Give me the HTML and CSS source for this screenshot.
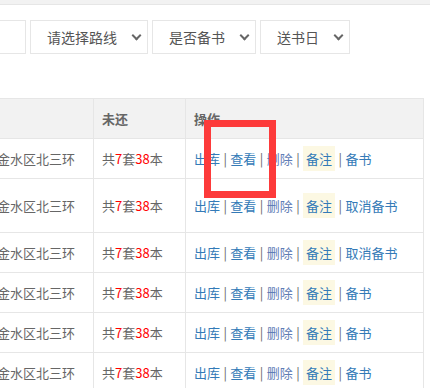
FILE: index.html
```html
<!DOCTYPE html>
<html lang="zh-CN">
<head>
    <meta charset="UTF-8">
    <meta name="viewport" content="width=device-width, initial-scale=1.0">
    <title>借书列表</title>
    <link rel="stylesheet" href="styles.css">
</head>
<body>
    <div class="top-bar"></div>
    <div class="panel">
        <div class="filters">
            <input type="text" class="search-box">
            <div class="select-box">请选择路线<span class="arrow"></span></div>
            <div class="select-box">是否备书<span class="arrow"></span></div>
            <div class="select-box">送书日<span class="arrow"></span></div>
        </div>

        <div class="table-wrap">
            <table class="list-table">
                <colgroup>
                    <col class="col-addr">
                    <col class="col-left">
                    <col class="col-ops">
                </colgroup>
                <thead>
                    <tr>
                        <th></th>
                        <th>未还</th>
                        <th>操作</th>
                    </tr>
                </thead>
                <tbody>
                    <tr>
                        <td>金水区北三环</td>
                        <td>共<span class="num">7</span>套<span class="num">38</span>本</td>
                        <td class="ops"><a>出库</a> | <a>查看</a> | <a class="del">删除</a> | <span class="note">备注</span> | <a>备书</a></td>
                    </tr>
                    <tr class="tall">
                        <td>金水区北三环</td>
                        <td>共<span class="num">7</span>套<span class="num">38</span>本</td>
                        <td class="ops"><a>出库</a> | <a>查看</a> | <a class="del">删除</a> | <span class="note">备注</span> | <a>取消备书</a></td>
                    </tr>
                    <tr>
                        <td>金水区北三环</td>
                        <td>共<span class="num">7</span>套<span class="num">38</span>本</td>
                        <td class="ops"><a>出库</a> | <a>查看</a> | <a class="del">删除</a> | <span class="note">备注</span> | <a>取消备书</a></td>
                    </tr>
                    <tr>
                        <td>金水区北三环</td>
                        <td>共<span class="num">7</span>套<span class="num">38</span>本</td>
                        <td class="ops"><a>出库</a> | <a>查看</a> | <a class="del">删除</a> | <span class="note">备注</span> | <a>备书</a></td>
                    </tr>
                    <tr>
                        <td>金水区北三环</td>
                        <td>共<span class="num">7</span>套<span class="num">38</span>本</td>
                        <td class="ops"><a>出库</a> | <a>查看</a> | <a class="del">删除</a> | <span class="note">备注</span> | <a>备书</a></td>
                    </tr>
                    <tr>
                        <td>金水区北三环</td>
                        <td>共<span class="num">7</span>套<span class="num">38</span>本</td>
                        <td class="ops"><a>出库</a> | <a>查看</a> | <a class="del">删除</a> | <span class="note">备注</span> | <a>备书</a></td>
                    </tr>
                </tbody>
            </table>
        </div>
    </div>

    <div class="mark-box"></div>
</body>
</html>
```

FILE: styles.css
```css
body {
    margin: 0;
    font-family: "Noto Sans CJK SC", "Noto Sans", sans-serif;
    background: #fff;
    color: #666;
    overflow: hidden;
    height: 388px;
    position: relative;
}

.top-bar {
    height: 4px;
    background: #f2f2f2;
    border-bottom: 1px solid #e6e6e6;
}

.panel {
    padding-top: 15px;
}

.filters {
    display: flex;
    gap: 4px;
    margin-left: -74px;
}

.search-box {
    width: 100px;
    height: 34px;
    box-sizing: border-box;
    border: 1px solid #e6e6e6;
    margin: 0;
    padding: 0;
}

.select-box {
    position: relative;
    height: 34px;
    box-sizing: border-box;
    border: 1px solid #e6e6e6;
    padding: 0 30px 0 16px;
    font-size: 14px;
    line-height: 32px;
    color: #555;
    white-space: nowrap;
}

.arrow {
    position: absolute;
    right: 7px;
    top: 11px;
    width: 5px;
    height: 5px;
    border-right: 2px solid #666;
    border-bottom: 2px solid #666;
    transform: rotate(45deg);
}

.table-wrap {
    margin-top: 44px;
    margin-left: -12px;
}

.list-table {
    border-collapse: collapse;
    table-layout: fixed;
    width: 436px;
    font-size: 13px;
}

.col-addr {
    width: 105px;
}

.col-left {
    width: 92px;
}

.col-ops {
    width: 238px;
}

.list-table th,
.list-table td {
    border: 1px solid #e6e6e6;
    padding: 0 8px;
    height: 39px;
    text-align: left;
    white-space: nowrap;
    color: #666;
}

.list-table th {
    background: #f2f2f2;
    font-weight: bold;
    color: #666;
}

.list-table tr.tall td {
    height: 53px;
}

.num {
    color: #f00;
}

.ops {
    color: #3a6fa8;
    word-spacing: 0.5px;
}

.ops a {
    color: #337ab7;
    text-decoration: none;
}

.ops a.del {
    color: #5f7db6;
}

.note {
    background: #fcf8e3;
    color: #337ab7;
    padding: 3px;
}

.mark-box {
    position: absolute;
    left: 204px;
    top: 120px;
    width: 72px;
    height: 78px;
    box-sizing: border-box;
    border: 7px solid #fd3a3a;
}
```
